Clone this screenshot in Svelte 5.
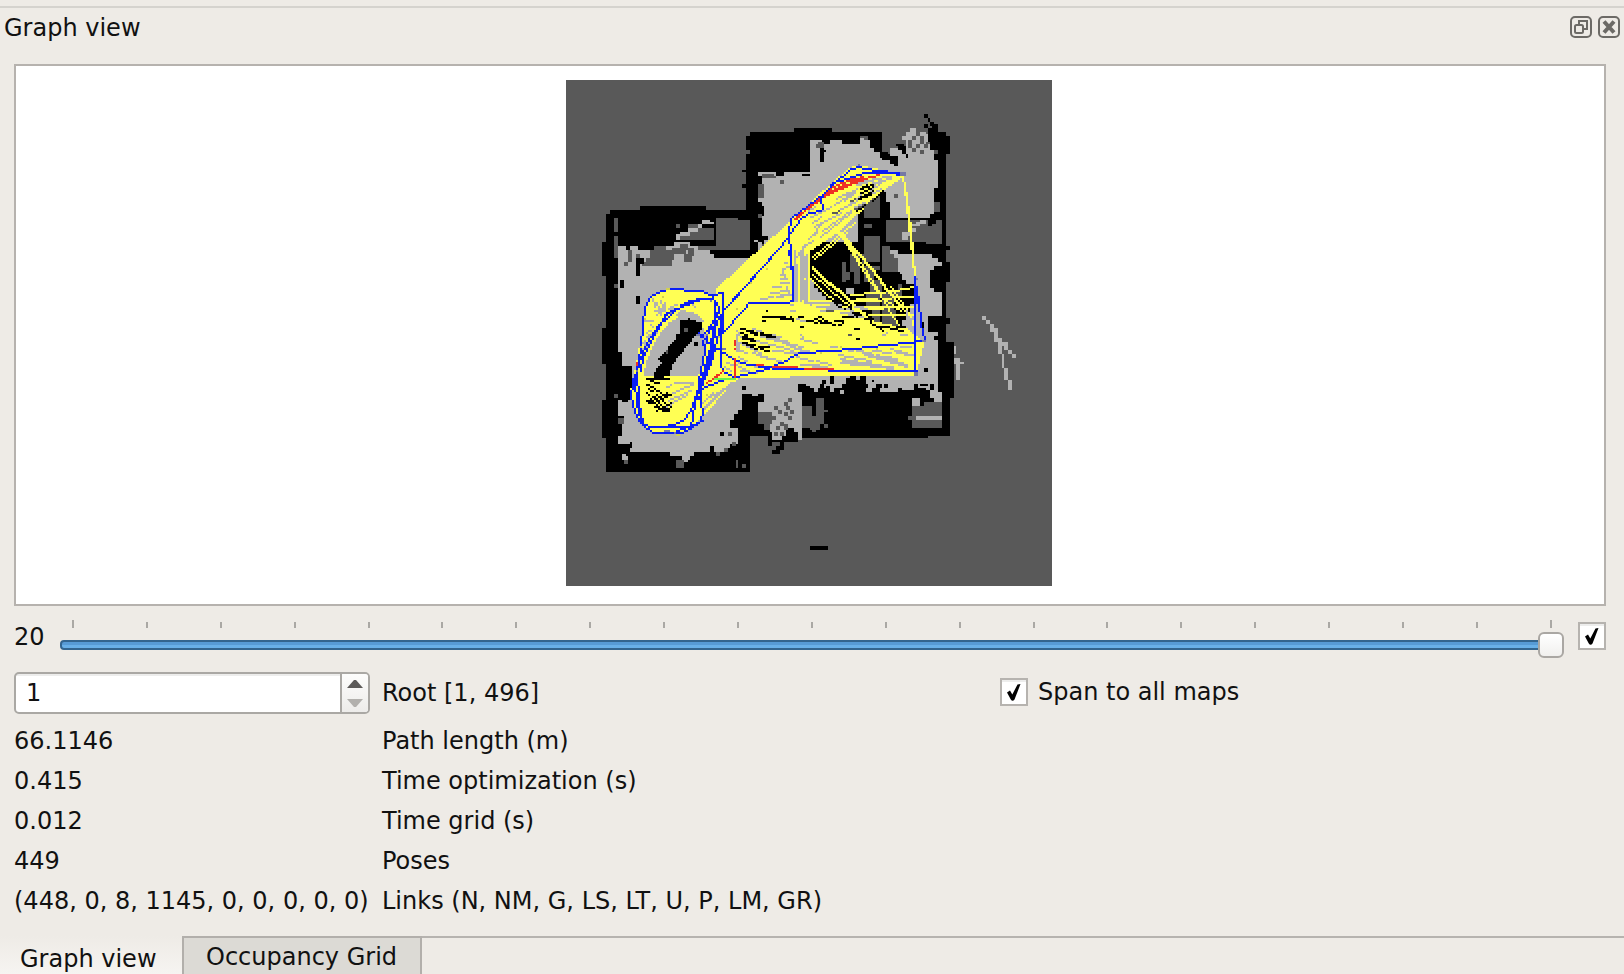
<script>
  const W = 243;
  const H = 253;
  const LEFT = 566;
  const TOP = 80;

  const palette = ['#595959', '#000000', '#b2b2b2', '#ffff54', '#0a1ef5', '#ee3124', '#6cf24a', '#7679a5', '#d2d04c'];
  const D = 0, K = 1, G = 2, Y = 3, B = 4, R = 5, N = 6, M = 7, O = 8;

  const tiles = { a: [590, 110], b: [740, 100], c: [590, 270], d: [720, 250], e: [790, 220], f: [680, 280] };
  const px = new Uint8Array(W * H);

  function read(tile, text) {
    const [ox, oy] = tiles[tile];
    const n = text.trim().split(/[\s,]+/).map(Number);
    const out = [];
    for (let i = 0; i < n.length; i += 2) out.push([(ox + n[i] / 3 - LEFT) / 2, (oy + n[i + 1] / 3 - TOP) / 2]);
    return out;
  }
  function put(x, y, c) {
    if (x >= 0 && y >= 0 && x < W && y < H) px[y * W + x] = c;
  }
  function inside(p, x, y) {
    let hit = false;
    for (let i = 0, j = p.length - 1; i < p.length; j = i++) {
      if (p[i][1] > y !== p[j][1] > y && x < ((p[j][0] - p[i][0]) * (y - p[i][1])) / (p[j][1] - p[i][1]) + p[i][0]) hit = !hit;
    }
    return hit;
  }
  // Filled polygon, sampled on grid cells (size 2) or on single pixels (size 1).
  function poly(c, tile, text, size = 2) {
    const p = read(tile, text);
    for (let y = 0; y < H; ) {
      const h = size === 2 && (y === 60 || y === 97) ? 1 : size;
      for (let x = 0; x < W; x += size)
        if (inside(p, x + size / 2, y + h / 2))
          for (let j = 0; j < h; j++) for (let i = 0; i < size; i++) put(x + i, y + j, c);
      y += h;
    }
  }
  // Boxes as x y w h groups.
  function box(c, tile, text) {
    const [ox, oy] = tiles[tile];
    for (const g of text.split(',')) {
      const [x, y, w, h] = g.trim().split(/\s+/).map(Number);
      const x0 = Math.round((ox + x / 3 - LEFT) / 2), y0 = Math.round((oy + y / 3 - TOP) / 2);
      const x1 = x0 + Math.max(1, Math.round(w / 6)), y1 = y0 + Math.max(1, Math.round(h / 6));
      for (let j = y0; j < y1; j++) for (let i = x0; i < x1; i++) put(i, j, c);
    }
  }
  function line(c, tile, text) {
    for (const g of text.split(';')) {
      const p = read(tile, g).map(([x, y]) => [Math.floor(x), Math.floor(y)]);
      for (let k = 1; k < p.length; k++) {
        const [x0, y0] = p[k - 1], [x1, y1] = p[k];
        const n = Math.max(Math.abs(x1 - x0), Math.abs(y1 - y0), 1);
        for (let i = 0; i <= n; i++) put(Math.round(x0 + ((x1 - x0) * i) / n), Math.round(y0 + ((y1 - y0) * i) / n), c);
      }
    }
  }

  // Walls
  poly(K, 'a', '48 312 60 312 60 300 150 300 150 288 348 288 348 300 480 300 480 246 468 246 468 78 480 78 480 66 612 66 630 66 630 978 480 978 480 1085 48 1085 48 984 36 984 36 870 48 870 48 762 36 762 36 654 48 654 48 498 36 498 36 396 48 396', 1);
  box(K, 'a', '456 180 12 6, 456 222 12 12');
  poly(K, 'b', '18 108 30 108 30 96 162 96 162 84 276 84 276 96 426 96 426 160 594 160 594 96 618 96 618 108 630 108 630 162 618 162 618 438 630 438 630 450 618 450 618 486 630 486 630 546 618 546 618 654 630 654 630 672 618 672 618 726 642 726 642 894 630 894 630 1008 564 1008 564 1014 174 1014 174 1026 100 1026 30 1008', 1);
  box(K, 'd', '144 576 12 12, 156 600 24 12, 168 588 24 12, 180 576 12 12, 210 564 24 12');

  // Free space, lower left room
  poly(G, 'a', '90 408 110 408 110 420 126 420 126 408 140 408 140 430 165 420 200 430 260 400 300 400 300 408 326 408 326 420 360 420 360 432 372 432 372 444 480 444 500 430 640 420 640 1000 530 850 522 870 500 860 480 852 456 852 456 870 462 912 445 912 445 930 420 935 420 950 440 950 446 980 440 1008 420 1008 408 1030 396 1030 372 1032 360 1030 312 1032 300 1044 282 1050 264 1044 246 1032 126 1032 120 1008 96 1008 84 990 96 960 84 920 84 870 120 870 126 820 120 780 90 770 96 740 84 700 84 600 90 570 84 500 84 450 90 440');
  // Free space, upper room
  poly(G, 'b', '66 220 84 216 216 216 216 120 250 120 252 138 276 126 300 120 310 132 350 132 384 120 396 144 420 156 425 180 450 185 462 200 475 195 470 175 450 162 450 138 486 140 502 160 490 110 520 84 530 96 560 96 560 125 582 150 582 174 594 180 594 260 582 264 582 306 594 318 560 360 452 360 452 320 438 300 438 270 360 330 360 420 360 430 216 450 216 640 0 640 0 500 40 480 70 420 66 300');
  // Free space, lower corridor and right room
  poly(G, 'd', '520 12 654 12 654 36 666 36 666 48 642 54 630 70 630 100 642 118 666 130 666 195 624 198 612 205 612 240 630 250 654 240 654 276 654 400 666 450 654 466 640 430 600 410 590 402 560 420 540 420 492 425 480 405 444 425 440 400 410 385 360 410 330 425 300 410 270 425 250 400 222 412 222 480 210 530 190 560 180 576 156 576 144 550 120 520 114 460 130 440 66 440 66 405 0 435 0 140 260 60 300 130 420 200 540 235 600 120 545 90 545 70 522 70');
  poly(D, 'c', '480 498 528 498 534 498 534 605 480 605', 1);
  poly(K, 'c', '528 456 546 492 546 516 534 516 534 498 480 498 480 460', 1);
  box(K, 'd', '640 204 36 12, 612 216 24 24, 642 234 12 12, 642 260 12 12, 612 354 12 12, 600 402 24 6, 606 420 36 12, 630 402 12 24, 66 408 12 12');
  box(G, 'd', '654 36 12 12, 630 420 12 24, 642 432 12 34, 546 402 36 16, 576 445 24 12, 576 457 24 12, 702 288 6 24, 702 324 18 12, 702 336 30 6, 708 342 12 12, 708 354 12 36');

  // Cells seen as unknown or blocked
  box(D, 'a', '468 120 12 12, 72 324 12 42, 72 378 12 66, 72 522 12 12, 378 324 102 96, 378 324 66 6, 258 342 12 12, 294 342 30 12, 294 354 78 36, 270 378 30 12, 114 420 12 36, 138 432 12 12, 180 418 72 30, 168 446 60 24, 156 458 40 12, 192 408 36 12, 216 452 30 15, 246 412 40 18, 270 400 24 20, 282 430 24 24, 294 412 18 24, 326 408 52 12, 504 222 18 42, 516 192 36 12, 528 200 30 8, 570 210 12 12, 504 312 12 12, 516 400 6 12, 102 456 12 12');
  box(K, 'a', '258 390 120 6, 372 354 6 42, 138 444 12 50, 150 444 12 18, 90 510 12 24, 138 560 12 26, 360 420 14 12, 492 378 30 12, 522 378 12 12, 516 390 6 12, 558 186 24 12, 444 324 36 6, 504 192 12 20, 516 290 6 30');
  box(G, 'a', '336 330 24 12, 360 336 12 6, 324 342 12 12, 294 354 30 12, 270 366 30 12, 258 372 12 18, 492 390 12 6, 504 396 12 24, 504 264 12 12, 504 186 12 10');
  box(K, 'b', '240 144 12 42, 186 220 24 8, 252 150 6 6, 420 156 24 18, 438 168 12 12, 450 174 12 12, 462 186 12 12, 468 132 24 6, 474 138 24 12, 486 150 12 12, 498 160 6 12, 552 42 12 12, 564 54 6 12, 570 66 12 12, 576 72 18 12, 552 72 12 12, 564 84 30 42, 570 96 24 54, 420 280 18 200, 438 310 12 54, 360 355 78 20, 360 372 12 110');
  box(D, 'b', '18 150 12 12, 228 126 24 18, 372 108 12 12, 360 108 12 10, 426 96 60 35, 426 130 24 20, 516 108 12 12, 528 96 12 12, 540 108 12 24, 504 120 12 24, 528 132 12 12, 552 132 12 12, 516 144 12 12, 540 150 12 12, 462 282 12 12, 372 270 48 84, 438 358 168 70, 584 306 20 30');

  // Blocked core
  poly(K, 'e', '80 65 210 65 210 10 288 10 288 66 410 66 410 102 326 102 312 120 312 155 336 160 336 192 350 200 350 220 336 330 280 320 230 300 160 235 70 145 62 130 66 80');
  box(D, 'e', '222 12 24 12, 222 48 48 78, 276 78 24 78, 300 102 24 54, 156 126 12 60, 168 156 12 24, 180 100 40 54, 192 150 18 40, 222 140 54 80, 225 220 45 88, 275 215 50 100, 324 192 12 40');
  box(K, 'e', '270 70 6 90, 276 156 54 24, 252 150 24 30, 222 186 20 30, 212 100 8 90, 225 270 20 30, 270 220 6 90, 310 225 12 40, 318 270 18 30');
  box(G, 'e', '168 204 24 20, 300 90 24 12, 336 40 18 20');
  box(K, 'b', '564 354 12 24, 576 348 12 24, 588 342 12 12, 576 516 24 36, 588 500 24 70, 576 462 20 12');
  box(G, 'b', '216 120 20 14, 360 112 12 18, 486 396 12 24, 498 396 12 12, 504 384 24 12, 516 372 24 6, 528 366 12 12, 540 360 18 10, 450 452 24 10, 594 486 12 12, 462 462 12 12, 486 108 14 14, 516 84 12 12, 552 102 12 24');
  // Lower furniture
  box(D, 'd', '246 468 30 64, 288 444 24 80, 276 496 12 48, 270 524 30 20, 312 480 12 6, 312 520 12 14, 576 468 90 64, 564 498 12 12, 588 457 12 12, 612 457 54 12, 114 486 42 36, 126 520 24 16, 162 470 12 12, 156 500 12 12, 174 482 12 12, 190 456 12 12, 204 444 12 12, 198 468 12 12, 210 480 12 12, 192 486 12 12, 204 500 12 12, 180 516 12 12, 168 530 12 12, 192 522 12 18, 180 546 12 12, 160 548 10 10');
  box(G, 'd', '588 498 78 12, 576 445 24 22');
  box(K, 'd', '234 402 12 24, 258 405 12 20, 270 412 12 18, 300 402 12 12, 306 390 12 14, 330 380 12 24, 318 408 12 18, 342 420 24 12, 366 402 14 24, 378 384 12 40, 390 378 18 22, 420 372 18 30, 444 390 18 6, 450 402 6 24, 468 402 12 24, 492 402 12 12, 432 402 12 12, 66 432 30 20, 96 440 20 24, 126 432 6 20');
  box(G, 'd', '360 420 12 12, 480 414 18 14, 444 372 12 54, 282 408 14 18');
  // Lower left debris
  box(K, 'c', '72 36 6 6, 90 30 12 24, 138 0 12 18, 90 290 34 90, 96 380 18 16, 84 438 18 6, 90 444 12 18, 72 414 12 24, 120 516 6 12, 114 522 10 12, 456 348 12 12, 390 486 12 12, 360 528 12 24, 444 420 12 30, 456 378 12 84, 450 450 30 60, 468 390 36 108, 432 432 24 24, 504 460 24 36, 504 372 18 24, 318 546 20 20, 264 560 12 12, 300 570 24 12');
  box(D, 'c', '72 42 12 12, 72 372 12 12, 84 444 18 16, 414 486 12 12, 426 516 12 12, 402 534 12 12, 378 546 12 12, 258 570 24 24, 102 570 12 12, 438 570 6 24, 456 582 12 12, 504 425 30 36, 522 456 20 24, 480 498 54 18');
  box(G, 'c', '96 552 12 18, 108 558 6 12, 282 564 14 14, 90 426 12 12');

  // Isolated scan to the east
  box(G, 'd', '786 198 12 12, 798 210 12 12, 810 222 12 12, 810 234 24 12, 822 246 12 30, 834 264 12 24, 846 276 18 12, 852 288 12 12, 864 300 12 12, 876 312 12 12, 834 288 12 24, 846 312 6 42, 852 354 12 36, 864 390 12 30');

  // Loop closures
  poly(Y, 'b', '490 222 440 214 358 194 330 202 265 258 205 312 150 365 0 500 -70 566 -70 600 0 700 90 640 160 602 168 480 216 450 300 395 345 350 440 265 490 232', 1);
  poly(Y, 'd', '0 105 80 95 218 150 400 200 560 235 612 278 590 375 210 378 210 384 60 384 0 438 -40 470 -60 420 -20 350 -10 250', 1);
  poly(Y, 'c', '180 80 210 62 235 57 340 63 370 80 400 72 440 100 600 94 600 260 430 330 440 324 400 370 340 440 310 470 265 492 200 492 150 462 130 410 122 360 135 300 150 220 160 140 170 95', 1);
  line(Y, 'b', '486 228 492 260 504 370 522 528; 490 228 498 290 510 390 526 528; 204 440 204 600; 208 440 208 600; 174 440 178 640; 192 440 190 640; 168 455 160 600; 216 468 345 366; 222 476 320 396');
  line(Y, 'e', '146 38 180 95 240 190 276 236; 165 48 200 90 250 145 292 206 330 255; 165 56 200 96 250 151 292 212 340 264; 155 38 186 90 265 212; 276 236 305 280 332 325; 66 142 110 180 150 215 190 250 240 305; 66 148 110 186 150 221 190 256 245 311; 66 164 110 200 160 240 200 275; 60 178 100 212 135 240; 180 226 262 220 315 210 375 202; 185 243 260 240 320 230 375 231; 200 238 262 238; 190 259 290 262 375 260; 195 267 280 268; 240 284 330 286 375 284; 200 274 240 284; 70 257 170 262; 60 242 135 242; 70 270 200 275; 300 200 345 260 370 300; 330 255 375 320; 276 190 300 225; 290 240 330 270');
  // Gaps between the closures
  poly(G, 'c', '160 318 170 272 200 205 240 155 290 134 330 155 345 190 348 250 325 316', 1);
  poly(K, 'c', '270 150 290 150 295 138 300 150 335 155 335 180 324 190 310 205 290 230 265 260 245 290 240 318 190 318 196 300 215 280 205 265 230 240 258 204 258 192 270 192', 1);
  box(D, 'c', '282 174 12 12, 226 240 8 10');
  box(K, 'c', '312 216 12 12');
  line(Y, 'c', '160 318 280 318; 150 322 310 322; 165 330 290 330; 200 318 240 318');
  line(K, 'c', '170 326 234 326; 192 318 220 318; 168 342 190 350 200 362; 174 356 190 362; 172 370 186 386; 184 332 206 336');
  line(G, 'c', '220 384 270 358 306 346; 230 390 300 360; 240 398 290 375; 256 336 310 336; 230 350 244 346; 248 370 290 352; 226 412 250 400; 340 420 390 370 430 338; 346 410 400 356; 360 392 420 340; 370 372 400 360; 334 405 370 370; 350 385 390 360');
  poly(K, 'c', '170 392 230 368 240 372 216 398 176 404', 1);
  line(K, 'c', '186 400 240 372; 192 408 230 392; 200 420 244 400; 212 410 236 424; 184 384 200 372; 204 362 220 378; 220 422 240 412; 198 404 214 414');
  line(Y, 'c', '180 378 210 410; 198 380 222 404; 210 372 236 398');
  line(G, 'c', '186 84 192 108; 210 90 216 108; 192 120 216 116; 200 134 220 124; 180 166 190 168; 176 180 198 186; 168 198 182 200; 160 220 176 216; 162 150 186 152; 158 236 170 236; 226 100 222 124; 205 110 215 135; 170 190 184 194; 242 108 262 102; 166 210 172 240; 300 98 316 108; 236 118 254 114; 198 96 204 120; 154 250 164 256');
  poly(G, 'c', '258 132 276 120 324 132 342 156 330 158 300 140 270 146', 1);
  line(G, 'b', '222 380 300 336; 204 414 246 366; 210 348 270 318; 216 366 240 348; 250 390 330 330; 190 440 220 420; 286 312 340 276; 300 324 350 300; 396 234 450 228; 340 246 400 240; 400 246 450 236; 318 282 350 264; 360 296 420 250; 330 310 370 280; 400 256 430 240; 216 402 228 396; 240 408 330 340; 290 294 320 276; 180 460 195 440; 348 252 380 246; 204 330 224 320; 168 470 180 450; 346 318 376 306; 372 290 420 268; 312 300 345 280');
  line(K, 'b', '360 264 396 252; 360 276 396 262; 360 288 396 270; 354 296 390 282; 366 258 380 252; 348 330 384 306; 396 300 426 270');
  line(D, 'b', '282 336 294 330; 276 340 290 340; 330 300 342 294; 346 324 366 312; 372 318 396 294');
  line(K, 'd', '126 200 180 202 214 208; 126 212 136 212; 180 206 210 206; 210 198 220 210; 236 198 250 198; 262 210 280 214; 282 204 304 200; 282 216 310 206; 300 216 328 218; 310 206 342 222; 342 210 368 210; 356 226 370 218; 240 232 246 232; 402 236 414 236; 412 266 416 266; 440 190 452 220 462 226; 470 228 500 232 550 242; 432 206 458 204; 378 198 420 192; 390 180 410 200; 352 162 376 176; 366 198 400 202; 340 150 390 170; 138 182 142 182; 480 238 490 240; 528 228 556 228');
  line(K, 'd', '64 236 98 240; 60 248 80 252; 94 250 112 254; 120 250 162 260; 66 258 98 266; 72 266 112 272; 66 276 104 282; 72 282 98 288; 84 288 112 294; 114 288 144 290; 120 296 144 300; 96 244 112 248; 66 264 96 268; 124 256 156 258');
  line(G, 'd', '48 240 62 258; 50 270 96 296 120 310; 112 270 180 290 220 304; 120 262 200 276 250 290; 160 264 200 270; 156 252 180 258; 96 306 150 324; 160 300 230 308; 60 300 80 308; 190 280 250 300; 210 292 280 308; 96 234 120 240; 240 264 290 276; 330 288 350 288; 54 320 80 330; 120 318 180 330; 232 320 280 330; 244 346 310 350; 50 262 54 300; 48 256 48 300; 46 330 110 350; 52 342 100 366; 60 360 110 368; 20 336 40 346; 14 352 34 362; 240 252 250 260');
  line(G, 'd', '354 312 384 320 450 332; 360 324 430 336 480 346; 366 330 440 344 520 354; 430 306 500 326 560 348; 432 312 500 332 550 344; 470 312 560 342; 410 300 450 306; 510 294 560 306; 540 288 575 290; 528 306 580 316; 362 338 420 346; 456 300 510 308; 450 350 520 352; 500 318 530 324; 376 296 400 300; 290 330 330 344; 280 342 320 350');
  line(G, 'd', '226 0 222 60 224 150; 240 10 242 148; 250 0 250 146; 256 20 258 150; 232 70 230 146; 190 54 206 50; 184 84 200 88; 194 100 206 96; 180 72 190 72; 160 112 184 112; 154 130 210 132; 120 146 160 140; 180 120 206 120; 198 110 204 130; 130 156 136 156; 190 60 196 80; 180 98 190 98; 172 140 190 140; 192 36 200 40');
  line(G, 'd', '290 170 330 172; 300 182 320 182; 340 172 366 178; 376 188 396 180; 214 180 226 180; 232 206 256 210; 210 162 216 162; 420 174 440 176; 560 180 566 220; 572 208 574 240; 556 210 580 230; 490 254 500 248; 540 252 560 256; 402 170 430 170; 590 130 590 180');
  line(D, 'd', '320 184 340 184; 384 256 390 254');
  box(G, 'd', '594 92 22 66, 600 158 22 60, 612 215 12 60');

  // Local closures
  line(R, 'b', '162 354 210 312 246 288 300 258 366 236 414 224; 168 354 220 306 260 276 310 254; 192 330 240 294 290 268 350 240; 204 316 258 282 320 252 380 234; 246 282 280 262 306 250 340 238; 250 292 300 264 330 252; 330 240 366 230');
  line(R, 'd', '42 270 42 286; 42 296 42 298; 42 324 42 378; 114 344 126 346');
  line(R, 'c', '138 278 138 298; 142 280 142 292; 318 362 324 362; 504 284 516 288');

  // Trajectory
  line(B, 'b', '492 222 440 216 380 204 358 198 330 204 286 246 246 286 204 312 150 358 146 400 150 470 158 530 158 600; 486 219 430 218 374 216 320 234 280 250 258 270 246 286 240 300 248 322 240 332 206 336 180 356 120 440 60 504 0 574 -20 594; 440 212 400 210');
  line(B, 'd', '206 0 212 40 218 80 218 150 200 156 138 158 86 160 72 174 50 200 24 230 6 246; 172 0 120 56 80 104 30 156 10 180; 612 272 560 278 500 284 400 294 330 300 234 308 204 324 180 340 140 354 70 374 48 380; 612 270 602 220 594 150 586 90; 584 80 584 368; 590 110 590 160; 590 360 400 360 250 358 180 356 130 350 60 336 20 314 0 300');
  line(B, 'c', '184 78 210 62 238 58 330 64 360 76; 340 320 322 370 304 420 280 450 250 466 216 472 176 470 150 450 140 400 134 330 144 280 170 220 206 162 240 120 290 104 330 88 366 86; 328 380 340 420 330 450 306 470 270 486 220 486 186 488 150 460 134 430 124 380 126 330 138 300 150 230 158 160 166 110 184 78; 324 360 312 400 300 470; 140 300 148 400 156 460; 246 120 276 112 320 88 352 86; 230 126 200 180 180 210 160 260 150 300; 246 120 240 136 206 166; 300 470 216 472; 336 450 250 490');
  line(B, 'f', '64 33 90 46 104 66 104 110 80 170 66 240 56 300 60 355; 90 46 128 40 128 160; 94 46 118 80 124 130 124 210 124 260 134 280 165 292; 60 168 80 150 104 116; 55 160 80 185 124 210; 110 96 100 150 84 230 66 310; 128 96 112 180 90 250 66 310 44 355; 104 160 84 260 66 290; 70 180 82 240 62 300; 165 292 120 302 75 318 60 330; 116 110 94 180; 0 75 30 60 80 58; 100 190 90 240');
  line(R, 'd', '156 350 228 350; 252 356 336 356; 42 324 42 378');
  line(R, 'f', '78 310 100 296 130 270; 92 300 112 288; 232 256 244 256; 164 182 164 196; 164 206 164 208');
  box(N, 'f', '102 293 66 6');
  box(M, 'b', '480 216 16 10, 354 192 6 6');
  box(M, 'c', '360 88 8 8, 318 190 10 6, 240 126 8 6, 222 478 20 8, 394 236 10 8, 346 190 6 6, 138 300 6 6, 252 486 6 6');
  box(M, 'd', '582 364 10 10, 608 272 10 8, 586 84 6 8');
  box(O, 'c', '228 52 10 5, 216 78 8 5, 150 230 6 6, 162 146 6 6, 260 490 12 5, 350 370 6 6, 386 200 6 6');
  box(O, 'd', '90 98 6 6, 140 54 6 6, 50 176 6 6, 300 308 6 6, 470 292 6 6, 360 290 6 6');

  // Origin marker under the map
  for (let y = 233; y < 235; y++) for (let x = 122; x < 131; x++) put(x, y, K);

  const paths = palette.map(() => '');
  for (let y = 0; y < H; y++) {
    for (let x = 0; x < W; ) {
      const c = px[y * W + x];
      let e = x + 1;
      while (e < W && px[y * W + e] === c) e++;
      if (c) paths[c] += `M${x} ${y}h${e - x}v1h${x - e}z`;
      x = e;
    }
  }

  const ticks = Array.from({ length: 21 }, (_, i) => i);
  const stats = [
    ['66.1146', 'Path length (m)'],
    ['0.415', 'Time optimization (s)'],
    ['0.012', 'Time grid (s)'],
    ['449', 'Poses'],
    ['(448, 0, 8, 1145, 0, 0, 0, 0, 0)', 'Links (N, NM, G, LS, LT, U, P, LM, GR)']
  ];
</script>

{#snippet check()}
  <span class="check">
    <svg viewBox="0 0 24 24" width="24" height="24"><path d="M5 12.5L8 10.5L10.3 14.5L15.5 4.5L18.5 4L12.5 19.5Q10.5 22 8.8 19.5Z" /></svg>
  </span>
{/snippet}

<div class="dock">
  <header>
    <h1>Graph view</h1>
    <div class="tools">
      <svg viewBox="0 0 22 22" width="22" height="22" fill="none" stroke="#6c6a66" stroke-width="2">
        <rect x="1" y="1" width="20" height="20" rx="4" />
        <rect x="5" y="9" width="8" height="8" rx="1.5" /><path d="M9 8V5H17V13H14" />
      </svg>
      <svg viewBox="0 0 22 22" width="22" height="22" fill="none" stroke="#6c6a66" stroke-width="2">
        <rect x="1" y="1" width="20" height="20" rx="4" />
        <path d="M6 5.5L16 16.5M16 5.5L6 16.5" stroke-width="4" />
      </svg>
    </div>
  </header>

  <div class="canvas">
    <svg class="map" viewBox="0 0 243 253" width="486" height="506" shape-rendering="crispEdges">
      <rect width="243" height="253" fill={palette[0]} />
      {#each paths as d, i}
        {#if d}<path {d} fill={palette[i]} />{/if}
      {/each}
    </svg>
  </div>

  <div class="slider-row">
    <span class="value">20</span>
    <div class="slider">
      <div class="ticks">{#each ticks as t}<i></i>{/each}</div>
      <div class="track"><b></b></div>
    </div>
    {@render check()}
  </div>

  <div class="root-row">
    <div class="spin">
      <span>1</span>
      <div class="arrows">
        <svg viewBox="0 0 26 38" width="26" height="38"><path d="M5 14L12 6H14L21 14Z" fill="#5c5a58" /><path d="M5 25L12 33H14L21 25Z" fill="#b2b0ad" /></svg>
      </div>
    </div>
    <span class="root-label">Root [1, 496]</span>
    <div class="span-all">{@render check()}<span>Span to all maps</span></div>
  </div>

  <div class="stats">
    {#each stats as [value, label]}
      <span>{value}</span><span>{label}</span>
    {/each}
  </div>

  <nav>
    <div class="tab active">Graph view</div>
    <div class="tab">Occupancy Grid</div>
    <div class="rest"></div>
  </nav>
</div>

<style>
  :global(body) { background: #eeebe6; overflow: hidden; }
  .dock { box-sizing: border-box; width: 1624px; height: 974px; padding-top: 6px; display: flex; flex-direction: column; background: #eeebe6; color: #111; font: 24px/28px "DejaVu Sans", sans-serif; white-space: nowrap; overflow: hidden; }
  header { box-sizing: border-box; height: 58px; flex: none; border-top: 2px solid #d5d3ce; padding: 6px 4px 0 4px; display: flex; justify-content: space-between; align-items: flex-start; }
  h1 { margin: 0; font: inherit; }
  .tools { display: flex; gap: 6px; padding-top: 2px; }
  .canvas { box-sizing: border-box; height: 542px; flex: none; margin: 0 18px 0 14px; border: 2px solid #b6b2ae; background: #fff; padding: 14px 0 0 550px; }
  .map { display: block; }
  .slider-row { height: 60px; flex: none; display: flex; padding-left: 14px; }
  .value { width: 46px; padding-top: 17px; }
  .slider { width: 1504px; padding-top: 14px; }
  .ticks { display: flex; justify-content: space-between; align-items: flex-end; height: 8px; margin: 0 12px; }
  .ticks i { width: 2px; height: 6px; background: #aaa8a4; }
  .ticks i:first-child, .ticks i:last-child { height: 8px; }
  .track { box-sizing: border-box; height: 10px; margin-top: 12px; border: 2px solid #33658f; border-radius: 4px; background: linear-gradient(#579bd6 50%, #69b0e8 50%); display: flex; justify-content: flex-end; align-items: center; }
  .track b { box-sizing: border-box; flex: none; width: 26px; height: 26px; margin-right: -2px; border: 2px solid #aaa7a3; border-radius: 6px; background: linear-gradient(#fff, #f1f0ee); }
  .check { box-sizing: border-box; width: 28px; height: 28px; flex: none; border: 2px solid #b6b3af; background: linear-gradient(#ededec 2px, #fff 2px); display: block; }
  .check svg { display: block; }
  .slider-row .check { margin: 16px 0 0 14px; }
  .root-row { height: 54px; flex: none; display: flex; align-items: center; padding-left: 14px; }
  .spin { box-sizing: border-box; width: 356px; height: 42px; border: 2px solid #aaa8a4; border-radius: 5px; background: linear-gradient(#ededec 2px, #fff 2px); display: flex; align-items: center; }
  .spin span { flex: 1; padding-left: 10px; }
  .arrows { width: 26px; height: 38px; border-left: 2px solid #aaa8a4; background: linear-gradient(#fdfdfc, #edecea); border-radius: 0 3px 3px 0; }
  .arrows svg { display: block; }
  .root-label { width: 618px; padding-left: 12px; box-sizing: border-box; }
  .span-all { display: flex; align-items: center; gap: 10px; margin: -2px 0 0 12px; }
  .span-all > span:last-child { margin-top: -1px; }
  .stats { margin-top: 1px; display: grid; grid-template-columns: 368px 1fr; grid-auto-rows: 40px; align-items: center; padding-left: 14px; }
  nav { height: 52px; margin-top: auto; margin-bottom: -14px; flex: none; display: flex; }
  .tab { box-sizing: border-box; width: 240px; border: 2px solid #b2afab; border-bottom: 0; background: #dcdad5; padding: 5px 0 0 22px; }
  .tab.active { width: 182px; border: 0; background: linear-gradient(#eeebe6, #f6f4f1 38px); padding: 9px 0 0 20px; }
  .rest { flex: 1; border-top: 2px solid #b6b3af; }
</style>
